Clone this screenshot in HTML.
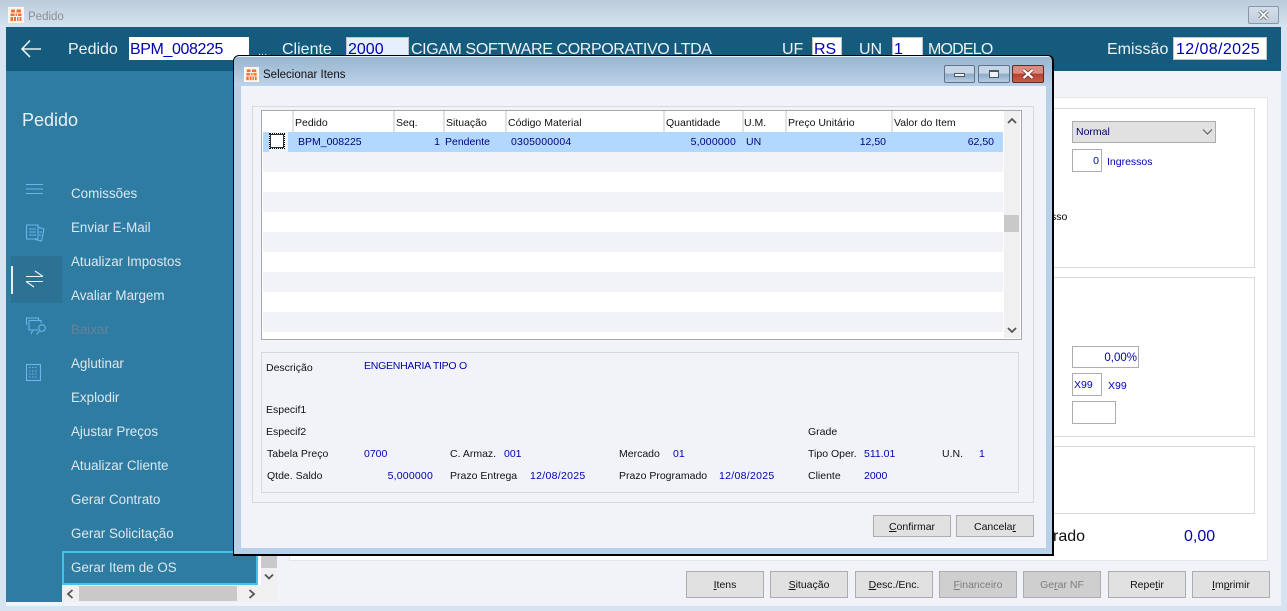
<!DOCTYPE html>
<html><head><meta charset="utf-8"><style>
html,body{margin:0;padding:0}
body{width:1287px;height:611px;overflow:hidden;position:relative;background:#d6e4f1;font-family:"Liberation Sans",sans-serif;font-size:10.5px;color:#111}
div,span.a,svg{position:absolute}
.t{position:absolute;white-space:nowrap;line-height:14px;margin-top:1px}
.b{color:#0000b4}
.n{color:#000080}
.h{font-size:16px;line-height:20px;color:#eef3f6;position:absolute;white-space:nowrap;margin-top:1px}
.i{background:#fff;color:#0000b4;font-size:16px;line-height:24px;border:1px solid #c4c4c4;box-sizing:border-box;white-space:nowrap;overflow:hidden;padding-left:1px;height:23px;top:37px}
.m{position:absolute;left:71px;font-size:13.4px;line-height:16px;color:#dde7ee;white-space:nowrap;margin-top:1px}
.btn{background:#e1e1e1;border:1px solid #adadad;box-sizing:border-box;text-align:center;font-size:10.5px;color:#111;white-space:nowrap}
.bb{top:571px;height:27px;width:78px;line-height:27px}
.dis{background:#cfcfcf;color:#7d7d7d}
.s{background:#fff;border:1px solid #adadad;box-sizing:border-box;color:#0000b4;white-space:nowrap}
.g{border:1px solid #d9d9d9;box-sizing:border-box}
.hl{top:111px;height:21px;width:2px;background:#e3e3e3}
</style></head><body>
<div style="left:0;top:0;width:1287px;height:27px;background:linear-gradient(#bccbd9,#d5e3f0)"></div>
<svg style="left:8px;top:7px" width="16" height="16" viewBox="0 0 16 16"><rect width="16" height="16" fill="#fbf6f2"/><path d="M3 2.500H7V5.500H3ZM8.500 2.500H13V5.500H8.500ZM2.500 6.500H6.500V9H2.500ZM7.500 6.500H9V9H7.500ZM10 6.500H13.500V9H10ZM2.500 10H5V14H2.500ZM6 10H8V14H6ZM9 10H10.500V14H9ZM11.500 10H13.500V14H11.500Z" fill="#f5702f"/></svg>
<div class="t" style="left:28px;top:9px;font-size:11.5px;color:#8b8f94">Pedido</div>
<div style="left:1248px;top:6px;width:31px;height:18px;box-sizing:border-box;border:1px solid #8796a8;border-radius:2px;background:linear-gradient(#d5dfea,#c1cfdd)"></div>
<svg style="left:1257px;top:9px" width="13" height="12"><path d="M2.500 2L10.500 10M10.500 2L2.500 10" stroke="#4f5358" stroke-width="3.400"/><path d="M2.500 2L10.500 10M10.500 2L2.500 10" stroke="#f4f4f4" stroke-width="2"/></svg>

<div style="left:6px;top:27px;width:1275px;height:579px;background:#f1f3f9"></div>
<div style="left:6px;top:27px;width:1275px;height:44px;background:#145b7d"></div>
<svg style="left:20px;top:38px" width="22" height="22"><path d="M21 11H2M10 2.500L2 11L10 19" stroke="#e8eef2" stroke-width="1.600" fill="none"/></svg>
<div class="h" style="left:68px;top:39px">Pedido</div>
<div class="i" style="left:129px;width:120px;border-color:#fff;padding-left:0;letter-spacing:-.4px">BPM_008225</div>
<div class="t" style="left:258px;top:44px;font-size:11px;color:#dce6ec;text-decoration:underline">...</div>
<div class="h" style="left:282px;top:39px">Cliente</div>
<div class="i" style="left:346px;width:63px;background:#e6f0fd">2000</div>
<div class="h" style="left:411px;top:39px;letter-spacing:-.39px">CIGAM SOFTWARE CORPORATIVO LTDA</div>
<div class="h" style="left:782px;top:39px">UF</div>
<div class="i" style="left:812px;width:30px">RS</div>
<div class="h" style="left:859px;top:39px">UN</div>
<div class="i" style="left:892px;width:31px">1</div>
<div class="h" style="left:928px;top:39px;letter-spacing:-.8px">MODELO</div>
<div class="h" style="left:1107px;top:39px">Emissão</div>
<div class="i" style="left:1173px;width:94px;padding-left:2px;letter-spacing:.4px">12/08/2025</div>

<div style="left:6px;top:71px;width:227px;height:531px;background:#2f7ca3"></div>
<div style="left:233px;top:555px;width:44px;height:47px;background:#2f7ca3"></div>
<div class="t" style="left:22px;top:108px;font-size:18px;line-height:22px;color:#e8f0f5">Pedido</div>
<div style="left:11px;top:256px;width:51px;height:47px;background:#2b7295"></div>
<div style="left:11px;top:266px;width:2px;height:28px;background:#e6eef3"></div>
<svg style="left:24px;top:180px" width="22" height="205" fill="none" stroke="#69b5ec" stroke-width="1.100">
<path d="M2 4.500H19M2 9H19M2 13.500H19"/>
<path d="M2.500 45V59H14V45ZM5 49H12M5 52H12M5 55H12" />
<path d="M14 47L20 49L17.500 61L11 59.500M15.500 52H18M15 55H17"/>
<path d="M2.500 145V138H14.500V140M5 140.500H17V143M14 150H5V140.500M9 150L7 154M15.500 151L12.500 154.500" />
<circle cx="18" cy="148" r="3.300"/>
<rect x="2.500" y="184.500" width="14" height="16"/>
<path d="M5 187.500H14M5 191H14M5 194H14M5 197H14" stroke-dasharray="1.500 1.500"/>
</svg>
<svg style="left:24px;top:268px" width="22" height="22" fill="none" stroke="#eef3f6" stroke-width="1.100"><path d="M2 8.500H19M11 3L19 8.500M2 13.500H19M2 13.500L10 19"/></svg>
<div class="m" style="top:185px">Comissões</div>
<div class="m" style="top:219px">Enviar E-Mail</div>
<div class="m" style="top:253px">Atualizar Impostos</div>
<div class="m" style="top:287px">Avaliar Margem</div>
<div class="m" style="top:321px;color:#64829a">Baixar</div>
<div class="m" style="top:355px">Aglutinar</div>
<div class="m" style="top:389px">Explodir</div>
<div class="m" style="top:423px">Ajustar Preços</div>
<div class="m" style="top:457px">Atualizar Cliente</div>
<div class="m" style="top:491px">Gerar Contrato</div>
<div class="m" style="top:525px">Gerar Solicitação</div>
<div style="left:257px;top:555px;width:4px;height:30px;background:#fff"></div>
<div style="left:62px;top:551px;width:196px;height:34px;box-sizing:border-box;border:2px solid #41c3ea"></div>
<div class="m" style="top:559px">Gerar Item de OS</div>
<div style="left:261px;top:555px;width:16px;height:30px;background:#f0f0f0"></div>
<div style="left:261px;top:555px;width:16px;height:13px;background:#c9c9c9"></div>
<svg style="left:264px;top:573px" width="10" height="8"><path d="M1 1.500L5 5.500L9 1.500" stroke="#555" stroke-width="1.800" fill="none"/></svg>
<div style="left:62px;top:585px;width:215px;height:17px;background:#f0f0f0"></div>
<div style="left:79px;top:586px;width:158px;height:15px;background:#c9c9c9"></div>
<svg style="left:66px;top:589px" width="8" height="10"><path d="M6.500 1L2 5L6.500 9" stroke="#555" stroke-width="1.800" fill="none"/></svg>
<svg style="left:248px;top:589px" width="8" height="10"><path d="M1.500 1L6 5L1.500 9" stroke="#555" stroke-width="1.800" fill="none"/></svg>

<div style="left:289px;top:97px;width:979px;height:464px;background:#fff;border:1px solid #e4e4e4;box-sizing:border-box"></div>
<div class="g" style="left:1000px;top:108px;width:255px;height:160px"></div>
<div class="g" style="left:1000px;top:277px;width:255px;height:160px"></div>
<div class="g" style="left:1000px;top:446px;width:255px;height:68px"></div>
<div class="btn" style="left:1072px;top:121px;width:144px;height:22px;text-align:left;padding-left:3px;line-height:21px;color:#000060">Normal</div>
<svg style="left:1202px;top:128px" width="11" height="8"><path d="M1 1.500L5.500 6L10 1.500" stroke="#555" fill="none"/></svg>
<div class="s" style="left:1072px;top:149px;width:30px;height:23px;text-align:right;padding-right:2px;line-height:23px">0</div>
<div class="t b" style="left:1107px;top:154px">Ingressos</div>
<div class="t" style="left:1051px;top:209px;color:#000">sso</div>
<div class="s" style="left:1072px;top:346px;width:67px;height:22px;text-align:right;padding-right:1px;line-height:22px;font-size:11.500px">0,00%</div>
<div class="s" style="left:1072px;top:373px;width:30px;height:23px;padding-left:1px;line-height:23px">X99</div>
<div class="t b" style="left:1108px;top:378px">X99</div>
<div class="s" style="left:1072px;top:401px;width:44px;height:23px"></div>
<div class="h" style="left:1053px;top:526px;color:#111">rado</div>
<div class="h b" style="left:1184px;top:526px;color:#0000b4">0,00</div>

<div class="btn bb" style="left:686px"><u>I</u>tens</div>
<div class="btn bb" style="left:770px"><u>S</u>ituação</div>
<div class="btn bb" style="left:855px"><u>D</u>esc./Enc.</div>
<div class="btn bb dis" style="left:939px"><u>F</u>inanceiro</div>
<div class="btn bb dis" style="left:1023px">Ge<u>r</u>ar NF</div>
<div class="btn bb" style="left:1108px">Repe<u>t</u>ir</div>
<div class="btn bb" style="left:1192px"><u>I</u>m<u>p</u>rimir</div>

<div style="left:233px;top:55px;width:821px;height:501px;box-sizing:border-box;border:1px solid #000;border-right:2px solid #000;border-bottom:2px solid #000;border-radius:6px 6px 0 0;background:#b8d1ea;box-shadow:inset 0 1px 0 #e8f0f8"></div>
<div style="left:234px;top:57px;width:818px;height:29px;background:linear-gradient(#9ab5d0,#bcd2e9);border-radius:4px 4px 0 0"></div>
<div style="left:241px;top:86px;width:805px;height:462px;background:#f1f3f9"></div>
<svg style="left:244px;top:67px" width="15" height="15" viewBox="0 0 16 16"><rect width="16" height="16" fill="#fbf6f2"/><path d="M3 2.500H7V5.500H3ZM8.500 2.500H13V5.500H8.500ZM2.500 6.500H6.500V9H2.500ZM7.500 6.500H9V9H7.500ZM10 6.500H13.500V9H10ZM2.500 10H5V14H2.500ZM6 10H8V14H6ZM9 10H10.500V14H9ZM11.500 10H13.500V14H11.500Z" fill="#f5702f"/></svg>
<div class="t" style="left:263px;top:67px;font-size:11.500px;color:#111">Selecionar Itens</div>
<div style="left:944px;top:65px;width:31px;height:18px;box-sizing:border-box;border:1px solid #5f738c;border-radius:2px;background:linear-gradient(#c6d6e6 45%,#8fabc9 50%,#b5cbe1)"></div>
<div style="left:954px;top:73px;width:11px;height:4px;box-sizing:border-box;background:#eef2f6;border:1px solid #4c5866"></div>
<div style="left:978px;top:65px;width:32px;height:18px;box-sizing:border-box;border:1px solid #5f738c;border-radius:2px;background:linear-gradient(#c6d6e6 45%,#8fabc9 50%,#b5cbe1)"></div>
<div style="left:989px;top:70px;width:10px;height:8px;box-sizing:border-box;background:#eef2f6;border:2px solid #4c5866;border-width:2px 1px 1px"></div>
<div style="left:1012px;top:65px;width:32px;height:18px;box-sizing:border-box;border:1px solid #5b2a24;border-radius:2px;background:linear-gradient(#d98d80 45%,#b83f2d 50%,#c5604f)"></div>
<svg style="left:1021px;top:68px" width="14" height="12"><path d="M2.500 2L11.500 10M11.500 2L2.500 10" stroke="#5b2a24" stroke-width="3.600"/><path d="M2.500 2L11.500 10M11.500 2L2.500 10" stroke="#fff" stroke-width="2.200"/></svg>

<div class="g" style="left:252px;top:106px;width:782px;height:397px"></div>
<div style="left:261px;top:110px;width:761px;height:230px;background:#fff;border:1px solid #a9a9a9;box-sizing:border-box"></div>
<div class="hl" style="left:292px"></div><div class="hl" style="left:393px"></div><div class="hl" style="left:443px"></div><div class="hl" style="left:505px"></div><div class="hl" style="left:663px"></div><div class="hl" style="left:742px"></div><div class="hl" style="left:785px"></div><div class="hl" style="left:891px"></div>
<div class="t" style="left:295px;top:115px">Pedido</div>
<div class="t" style="left:396px;top:115px">Seq.</div>
<div class="t" style="left:446px;top:115px">Situação</div>
<div class="t" style="left:508px;top:115px">Código Material</div>
<div class="t" style="left:666px;top:115px">Quantidade</div>
<div class="t" style="left:744px;top:115px">U.M.</div>
<div class="t" style="left:788px;top:115px">Preço Unitário</div>
<div class="t" style="left:894px;top:115px">Valor do Item</div>
<div style="left:263px;top:132px;width:740px;height:20px;background:#b3d8ff"></div>
<div style="left:263px;top:152px;width:740px;height:20px;background:#f1f3f9"></div>
<div style="left:263px;top:192px;width:740px;height:20px;background:#f1f3f9"></div>
<div style="left:263px;top:232px;width:740px;height:20px;background:#f1f3f9"></div>
<div style="left:263px;top:272px;width:740px;height:20px;background:#f1f3f9"></div>
<div style="left:263px;top:312px;width:740px;height:20px;background:#f1f3f9"></div>
<div style="left:269px;top:132px;width:19px;height:20px;background:#eef3fa"></div>
<div style="left:270px;top:134px;width:14px;height:14px;box-sizing:border-box;background:#fff;border:1px solid #333;outline:1px dotted #000"></div>
<div class="t n" style="left:298px;top:134px">BPM_008225</div>
<div class="t n" style="left:400px;width:40px;text-align:right;top:134px">1</div>
<div class="t n" style="left:445px;top:134px">Pendente</div>
<div class="t n" style="left:511px;top:134px;letter-spacing:.2px">0305000004</div>
<div class="t n" style="left:660px;width:76px;text-align:right;top:134px;letter-spacing:.2px">5,000000</div>
<div class="t n" style="left:746px;top:134px">UN</div>
<div class="t n" style="left:826px;width:60px;text-align:right;top:134px">12,50</div>
<div class="t n" style="left:934px;width:60px;text-align:right;top:134px">62,50</div>
<div style="left:1004px;top:111px;width:16px;height:227px;background:#f0f0f0"></div>
<div style="left:1004px;top:215px;width:15px;height:17px;background:#c9c9c9"></div>
<svg style="left:1007px;top:117px" width="10" height="8"><path d="M1 6L5 2L9 6" stroke="#555" stroke-width="1.800" fill="none"/></svg>
<svg style="left:1007px;top:326px" width="10" height="8"><path d="M1 2L5 6L9 2" stroke="#555" stroke-width="1.800" fill="none"/></svg>

<div class="g" style="left:261px;top:352px;width:758px;height:141px"></div>
<div class="t" style="left:266px;top:360px">Descrição</div>
<div class="t b" style="left:364px;top:358px;letter-spacing:-.25px">ENGENHARIA TIPO O</div>
<div class="t" style="left:266px;top:402px">Especif1</div>
<div class="t" style="left:266px;top:424px">Especif2</div>
<div class="t" style="left:808px;top:424px">Grade</div>
<div class="t" style="left:267px;top:446px">Tabela Preço</div>
<div class="t b" style="left:364px;top:446px">0700</div>
<div class="t" style="left:450px;top:446px">C. Armaz.</div>
<div class="t b" style="left:504px;top:446px">001</div>
<div class="t" style="left:619px;top:446px">Mercado</div>
<div class="t b" style="left:673px;top:446px">01</div>
<div class="t" style="left:808px;top:446px">Tipo Oper.</div>
<div class="t b" style="left:864px;top:446px">511.01</div>
<div class="t" style="left:942px;top:446px">U.N.</div>
<div class="t b" style="left:979px;top:446px">1</div>
<div class="t" style="left:267px;top:468px">Qtde. Saldo</div>
<div class="t b" style="left:373px;width:60px;text-align:right;top:468px;letter-spacing:.2px">5,000000</div>
<div class="t" style="left:450px;top:468px">Prazo Entrega</div>
<div class="t b" style="left:530px;top:468px;letter-spacing:.3px">12/08/2025</div>
<div class="t" style="left:619px;top:468px">Prazo Programado</div>
<div class="t b" style="left:719px;top:468px;letter-spacing:.3px">12/08/2025</div>
<div class="t" style="left:808px;top:468px">Cliente</div>
<div class="t b" style="left:864px;top:468px">2000</div>
<div class="btn" style="left:873px;top:515px;width:78px;height:22px;line-height:22px"><u>C</u>onfirmar</div>
<div class="btn" style="left:956px;top:515px;width:78px;height:22px;line-height:22px">Cancela<u>r</u></div>
</body></html>
